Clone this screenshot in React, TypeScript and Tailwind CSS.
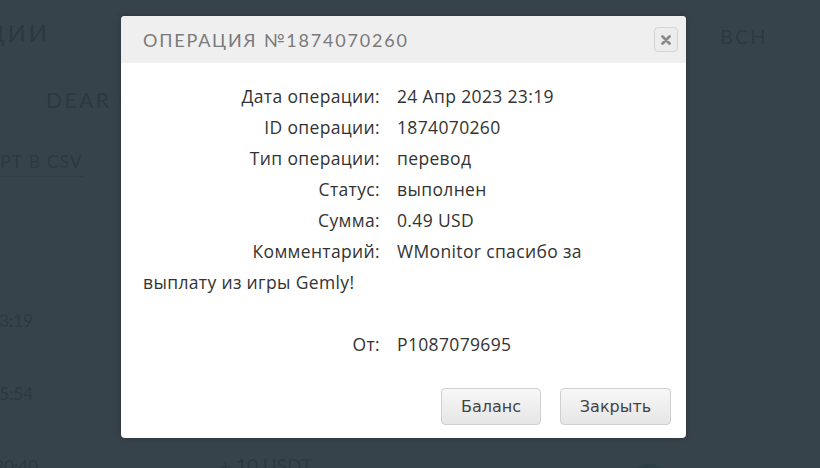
import React from 'react'

const rows: [string, string][] = [
  ['Дата операции:', '24 Апр 2023 23:19'],
  ['ID операции:', '1874070260'],
  ['Тип операции:', 'перевод'],
  ['Статус:', 'выполнен'],
  ['Сумма:', '0.49 USD'],
]

const bodyFont = { fontFamily: '"Open Sans", "Noto Sans", sans-serif' }

const Background = () => {
  return (
    <div
      className="w-full h-full flex flex-col text-[#2d383f]"
      style={{ fontFamily: 'Lato, "Noto Sans", sans-serif' }}
    >
      {/* top nav */}
      <div className="shrink-0 flex items-center h-[66px] whitespace-nowrap">
        <div className="w-[50px] shrink-0 flex justify-end text-[24px] tracking-[0.12em]">ОПЕРАЦИИ</div>
        <span className="ml-[670px] shrink-0 text-[20px] tracking-[0.1em] pt-[6px]">BCH</span>
        <span className="ml-[57px] shrink-0 text-[20px] tracking-[0.1em] pt-[6px]">LTC</span>
      </div>
      <div className="shrink-0 h-[68px] flex items-center pl-[46px] text-[21px] tracking-[0.12em] whitespace-nowrap">
        DEAR CLIENT
      </div>
      <div className="shrink-0 h-[58px] flex items-center whitespace-nowrap">
        <div className="w-[83px] shrink-0 flex justify-end text-[17px] tracking-[0.08em]">
          <span className="border-b border-dotted border-[#2d383f] pb-[1px]">ЭКСПОРТ В CSV</span>
        </div>
      </div>
      <div className="shrink-0 h-[92px]" />
      {/* history rows */}
      <div className="shrink-0 flex flex-col text-[17px] whitespace-nowrap">
        <div className="h-[73px] flex items-center">
          <div className="w-[33px] shrink-0 flex justify-end">24.04.2023 23:19</div>
        </div>
        <div className="h-[73px] flex items-center">
          <div className="w-[33px] shrink-0 flex justify-end">22.04.2023 15:54</div>
        </div>
        <div className="h-[73px] flex items-center">
          <div className="w-[38px] shrink-0 flex justify-end">20.04.2023 20:40</div>
          <span className="ml-[182px] text-[19px]">+ 10 USDT</span>
          <span className="ml-auto mr-[150px] w-[42px] h-[42px] rounded-full bg-[#2e3f46] mt-[36px] shrink-0" />
        </div>
      </div>
    </div>
  )
}

export default function App() {
  return (
    <div className="relative w-[820px] h-[468px] overflow-hidden bg-[#37434b]">
      <Background />

      {/* modal */}
      <div className="absolute left-[121px] top-[16px] w-[565px] h-[422px] bg-white rounded-[4px] overflow-hidden shadow-[0_0_6px_rgba(0,0,0,0.25)] flex flex-col">
        <div className="h-[47px] bg-[#efefef] flex items-center pl-[22px] pr-[8px]">
          <h3
            className="text-[18px] tracking-[0.1em] text-[#7a7a7a] pt-[2px]"
            style={{ fontFamily: 'Lato, "Noto Sans", sans-serif' }}
          >
            ОПЕРАЦИЯ №1874070260
          </h3>
          <button className="ml-auto w-[24px] h-[25px] rounded-[4px] border border-[#d4d4d4] bg-[#ececec] flex items-center justify-center text-[#8a8a8a]">
            <svg width="10" height="10" viewBox="0 0 10 10">
              <path d="M1.5 1.5 L8.5 8.5 M8.5 1.5 L1.5 8.5" stroke="currentColor" strokeWidth="2.8" strokeLinecap="round" />
            </svg>
          </button>
        </div>

        <div className="flex-1 flex flex-col pl-[22px] pr-[15px] pt-[18px] pb-[13px]">
          <div className="text-[17.5px] tracking-[0.02em] leading-[31px] text-[#333]" style={bodyFont}>
            {rows.map(([label, value]) => (
              <div key={label} className="flex">
                <span className="w-[237px] text-right shrink-0">{label}</span>
                <span className="ml-[17px]">{value}</span>
              </div>
            ))}
            <p>
              <span className="inline-block w-[237px] text-right">Комментарий:</span>
              <span className="ml-[17px]">WMonitor спасибо за</span>
              <br />
              выплату из игры Gemly!
            </p>
            <div className="h-[31px]" />
            <div className="flex">
              <span className="w-[237px] text-right shrink-0">От:</span>
              <span className="ml-[17px]">P1087079695</span>
            </div>
          </div>

          <div
            className="mt-auto flex justify-end gap-[19px] text-[16px] text-[#444]"
            style={{ fontFamily: '"DejaVu Sans", Verdana, sans-serif' }}
          >
            <button className="w-[100px] h-[37px] rounded-[4px] border border-[#cfcfcf] bg-gradient-to-b from-[#f7f7f7] to-[#e6e6e6]">
              Баланс
            </button>
            <button className="w-[111px] h-[37px] rounded-[4px] border border-[#cfcfcf] bg-gradient-to-b from-[#f7f7f7] to-[#e6e6e6]">
              Закрыть
            </button>
          </div>
        </div>
      </div>
    </div>
  )
}
